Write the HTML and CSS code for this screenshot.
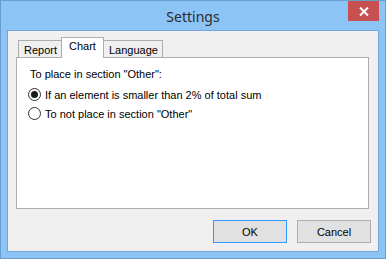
FILE: index.html
```html
<!DOCTYPE html>
<html lang="en">
<head>
    <meta charset="UTF-8">
    <title>Settings</title>
    <link rel="stylesheet" href="styles.css">
</head>
<body>
    <div class="window">
        <div class="titlebar">
            <span class="title">Settings</span>
            <button class="close" type="button">
                <svg width="10" height="9" viewBox="0 0 10 9">
                    <path d="M1 0.5 L9 8.5 M9 0.5 L1 8.5" stroke="#fff" stroke-width="2" />
                </svg>
            </button>
        </div>
        <div class="content">
            <div class="tabs">
                <div class="tab">Report</div>
                <div class="tab active">Chart</div>
                <div class="tab">Language</div>
            </div>
            <div class="panel">
                <div class="caption">To place in section "Other":</div>
                <label class="radio-row">
                    <span class="radio checked"></span>
                    If an element is smaller than 2% of total sum
                </label>
                <label class="radio-row">
                    <span class="radio"></span>
                    To not place in section "Other"
                </label>
            </div>
            <div class="buttons">
                <button class="btn default" type="button">OK</button>
                <button class="btn" type="button">Cancel</button>
            </div>
        </div>
    </div>
</body>
</html>
```
FILE: styles.css
```css
body {
    margin: 0;
    background-color: #fff;
    font-family: "Liberation Sans", Arial, sans-serif;
    font-size: 11px;
    color: #000;
}

.window {
    width: 386px;
    height: 259px;
    box-sizing: border-box;
    background-color: #8cc4f6;
    border: 1px solid #6b9ccf;
    display: flex;
    flex-direction: column;
}

.titlebar {
    height: 29px;
    display: flex;
    justify-content: center;
    align-items: center;
    position: relative;
}

.title {
    font-family: "Noto Sans", "Open Sans", sans-serif;
    font-size: 14px;
    color: #2b2b2b;
    margin-top: 1px;
}

.close {
    position: absolute;
    top: 0;
    right: 6px;
    width: 31px;
    height: 20px;
    border: none;
    padding: 0;
    background-color: #c75050;
    display: flex;
    align-items: center;
    justify-content: center;
}

.content {
    flex: 1;
    margin: 0 6px 6px 6px;
    border: 1px solid #74a6dc;
    background-color: #f0f0f0;
    padding: 6px 9px 0 8px;
}

.tabs {
    display: flex;
    align-items: flex-end;
    height: 20px;
    padding-left: 2px;
}

.tab {
    position: relative;
    height: 17px;
    box-sizing: border-box;
    border: 1px solid #adadad;
    border-bottom: none;
    padding: 2px 4px 0 5px;
    background-color: #f0f0f0;
    line-height: 14px;
}

.tab + .tab {
    margin-left: -1px;
}

.tab.active {
    height: 21px;
    margin-bottom: -1px;
    background-color: #fff;
    padding: 1px 7px 0 7px;
    z-index: 1;
}

.panel {
    height: 152px;
    box-sizing: border-box;
    background-color: #fff;
    border: 1px solid #adadad;
    padding: 9px 0 0 11px;
}

.caption {
    line-height: 14px;
    margin-bottom: 4px;
    padding-left: 2px;
}

.radio-row {
    display: flex;
    align-items: center;
    height: 19px;
}

.radio {
    width: 13px;
    height: 13px;
    box-sizing: border-box;
    border: 1px solid #333;
    border-radius: 50%;
    background-color: #fff;
    margin-right: 4px;
    display: flex;
    align-items: center;
    justify-content: center;
}

.radio.checked::after {
    content: "";
    width: 7px;
    height: 7px;
    border-radius: 50%;
    background-color: #1a1a1a;
}

.buttons {
    display: flex;
    justify-content: flex-end;
    gap: 10px;
    margin-top: 11px;
    margin-right: -2px;
}

.btn {
    width: 74px;
    height: 23px;
    border: 1px solid #adadad;
    background-color: #e1e1e1;
    font-family: "Liberation Sans", Arial, sans-serif;
    font-size: 11px;
    color: #000;
    padding: 0;
}

.btn.default {
    border-color: #3399ff;
}
```
